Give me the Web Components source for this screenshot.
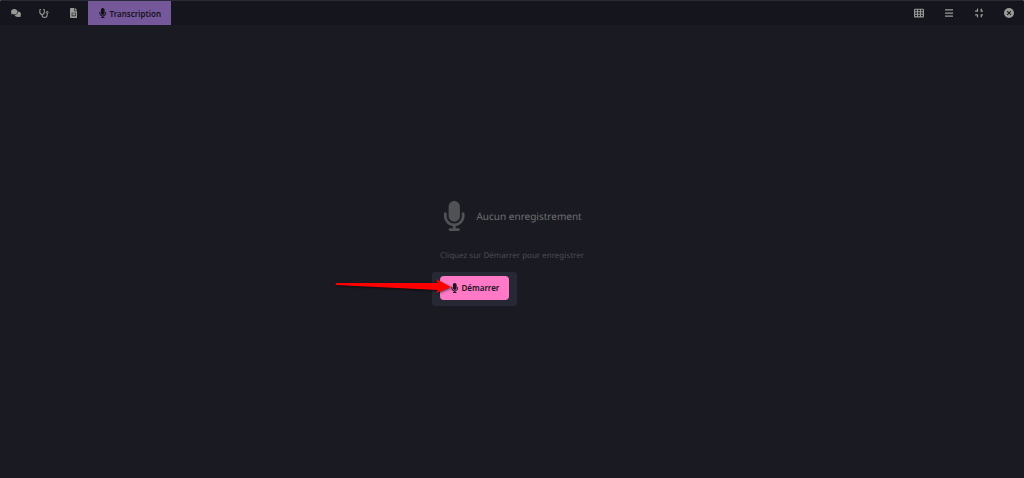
<!DOCTYPE html>
<html lang="fr">
<head>
<meta charset="utf-8">
<title>Transcription</title>
<style>
  html {
    background: #6b6c70;
  }
  body {
    margin: 0;
    font-family: "Noto Sans", "Open Sans", sans-serif;
    font-size: 8px;
    text-rendering: geometricPrecision;
  }
</style>
</head>
<body>
<app-window>
  <tool-bar slot="bar">
    <bar-button slot="start" icon="comments" label="Discussion"></bar-button>
    <bar-button slot="start" icon="stethoscope" label="Consultation"></bar-button>
    <bar-button slot="start" icon="file" label="Document"></bar-button>
    <bar-button slot="start" icon="microphone" active>Transcription</bar-button>
    <bar-button slot="end" icon="table" label="Tableau"></bar-button>
    <bar-button slot="end" icon="bars" label="Menu"></bar-button>
    <bar-button slot="end" icon="compress" label="Réduire"></bar-button>
    <bar-button slot="end" icon="close" label="Fermer"></bar-button>
  </tool-bar>
  <empty-state icon="microphone">
    <span slot="title">Aucun enregistrement</span>
    <span slot="hint">Cliquez sur Démarrer pour enregistrer</span>
    <record-button slot="action">Démarrer</record-button>
  </empty-state>
</app-window>

<script>
const ICONS = {
  comments: ['0 0 640 512', '<path d="M208 352c115 0 208-79 208-176S323 0 208 0 0 79 0 176c0 39 15 74 40 103-4 15-12 29-22 41-3 4-7 8-10 11-9 9-6 21 8 21 38 0 74-13 98-26 29 17 61 26 94 26z"/><path d="M448 176c0 112-99 199-218 208 25 75 105 128 202 128 34 0 66-8 94-23 24 12 58 23 98 23 15 0 20-13 8-23-15-14-26-31-32-49 25-29 40-65 40-104 0-93-82-169-192-175v15z"/>'],
  stethoscope: ['0 0 576 512', '<path fill="none" stroke="currentColor" stroke-width="60" stroke-linecap="round" stroke-linejoin="round" d="M96 34L48 46V176c0 74 58 132 128 132s128-58 128-132V46L256 34M176 308v32c0 80 62 142 144 142s144-62 144-142V256"/><circle cx="464" cy="192" r="54" fill="none" stroke="currentColor" stroke-width="52"/>'],
  file: ['0 0 384 512', '<path fill-rule="evenodd" d="M64 0C29 0 0 29 0 64v384c0 35 29 64 64 64h256c35 0 64-29 64-64V160H256c-18 0-32-14-32-32V0H64zM256 0v128h128L256 0zM88 240h208v176H88V240zm30 30v116h148V270H118z"/>'],
  microphone: ['0 0 384 512', '<path d="M192 0C139 0 96 43 96 96V256c0 53 43 96 96 96s96-43 96-96V96c0-53-43-96-96-96zM64 216c0-13-11-24-24-24s-24 11-24 24v40c0 89 66 163 152 174V464H120c-13 0-24 11-24 24s11 24 24 24H264c13 0 24-11 24-24s-11-24-24-24H216V430c86-11 152-85 152-174V216c0-13-11-24-24-24s-24 11-24 24v40c0 71-57 128-128 128S64 327 64 256V216z"/>'],
  table: ['0 0 512 512', '<path fill-rule="evenodd" d="M64 32C29 32 0 61 0 96v320c0 35 29 64 64 64h384c35 0 64-29 64-64V96c0-35-29-64-64-64H64zM60 92h94v80H60zM209 92h94v80H209zM358 92h94v80H358zM60 216h94v80H60zM209 216h94v80H209zM358 216h94v80H358zM60 340h94v80H60zM209 340h94v80H209zM358 340h94v80H358z"/>'],
  bars: ['0 0 448 512', '<path d="M0 64h448v64H0zM0 224h448v64H0zM0 384h448v64H0z"/>'],
  compress: ['0 0 448 512', '<path fill="none" stroke="currentColor" stroke-width="68" stroke-linecap="round" stroke-linejoin="round" d="M128 64v96H32M320 64v96h96M32 352h96v96M416 352h-96v96"/>'],
  close: ['0 0 512 512', '<path fill-rule="evenodd" d="M256 0a256 256 0 1 0 0 512 256 256 0 0 0 0-512zM175 141l81 81 81-81 34 34-81 81 81 81-34 34-81-81-81 81-34-34 81-81-81-81z"/>']
};

function icon(name) {
  const [box, shapes] = ICONS[name];
  return `<svg viewBox="${box}" fill="currentColor" aria-hidden="true">${shapes}</svg>`;
}

class AppWindow extends HTMLElement {
  constructor() {
    super();
    this.attachShadow({ mode: 'open' });
    this.shadowRoot.innerHTML = `
        <style>
            :host {
              display: flex;
              flex-direction: column;
              min-height: 100vh;
              box-sizing: border-box;
              overflow: hidden;
              border-radius: 3px 3px 0 0;
              background: #1a1a22;
            }
            main {
              flex: 1;
              display: flex;
              align-items: center;
              justify-content: center;
              padding-top: 3px;
            }
        </style>
        <slot name="bar"></slot>
        <main><slot></slot></main>
    `;
  }
}

class ToolBar extends HTMLElement {
  constructor() {
    super();
    this.attachShadow({ mode: 'open' });
    this.shadowRoot.innerHTML = `
        <style>
            :host {
              display: flex;
              justify-content: space-between;
              height: 24px;
              border-top: 1px solid #282b38;
              background: #14151d;
            }
            nav, div {
              display: flex;
            }
            nav {
              padding-left: 1px;
              --button-width: 29px;
            }
        </style>
        <nav><slot name="start"></slot></nav>
        <div><slot name="end"></slot></div>
    `;
  }
}

class BarButton extends HTMLElement {
  constructor() {
    super();
    this.attachShadow({ mode: 'open' });
    const label = this.getAttribute('label');
    this.shadowRoot.innerHTML = `
        <style>
            :host {
              display: flex;
              min-width: var(--button-width, 30px);
            }
            button {
              flex: 1;
              display: flex;
              align-items: center;
              justify-content: center;
              gap: 3px;
              padding: 0;
              border: none;
              background: transparent;
              color: #999996;
              font: inherit;
              cursor: pointer;
            }
            svg {
              height: 10px;
            }
            :host([icon="comments"]) svg {
              height: 8px;
            }
            :host([icon="stethoscope"]) svg {
              height: 9px;
            }
            :host([active]) button {
              padding: 0 10px 0 11px;
              background: #75589a;
              color: #15121c;
              font-weight: 600;
            }
        </style>
        <button type="button" ${label ? `aria-label="${label}"` : ''}>
          ${icon(this.getAttribute('icon'))}<slot></slot>
        </button>
    `;
  }
}

class EmptyState extends HTMLElement {
  constructor() {
    super();
    this.attachShadow({ mode: 'open' });
    this.shadowRoot.innerHTML = `
        <style>
            :host {
              display: block;
            }
            header {
              display: flex;
              align-items: center;
              gap: 11px;
              padding-left: 3px;
              color: #505154;
            }
            header svg {
              height: 30px;
            }
            h1 {
              margin: 0;
              font-size: 10px;
              font-weight: 400;
              line-height: 16px;
              color: #707173;
            }
            p {
              margin: 19px 0 10px;
              font-size: 8px;
              line-height: 12px;
              color: #4c4d50;
            }
        </style>
        <header>${icon(this.getAttribute('icon'))}<h1><slot name="title"></slot></h1></header>
        <p><slot name="hint"></slot></p>
        <slot name="action"></slot>
    `;
  }
}

class RecordButton extends HTMLElement {
  constructor() {
    super();
    this.attachShadow({ mode: 'open' });
    this.shadowRoot.innerHTML = `
        <style>
            :host {
              display: block;
              position: relative;
              width: fit-content;
              margin-left: -8px;
              padding: 4px 8px 6px;
              border-radius: 3px;
              background: #262833;
            }
            button {
              display: flex;
              align-items: center;
              gap: 3px;
              height: 24px;
              padding: 0 10px 0 11px;
              border: none;
              border-radius: 4px;
              background: #ff79c6;
              color: #22131f;
              font: inherit;
              font-weight: 600;
              cursor: pointer;
            }
            button svg {
              height: 10px;
            }
            /* pointer laid over the button, its tip on the microphone */
            .arrow {
              position: absolute;
              right: 66px;
              top: 7px;
              width: 116px;
              height: 16px;
              overflow: visible;
              filter: drop-shadow(1px 1px 1px rgba(0,0,0,0.6));
              pointer-events: none;
            }
        </style>
        <button type="button">${icon('microphone')}<slot></slot></button>
        <svg class="arrow" viewBox="0 0 116 16" aria-hidden="true">
          <path fill="#ff0000" d="M1 4L103 4L101 0L116 8L101 14L103 11L1 6Q0 5 1 4z"/>
        </svg>
    `;
  }
}

customElements.define('app-window', AppWindow);
customElements.define('tool-bar', ToolBar);
customElements.define('bar-button', BarButton);
customElements.define('empty-state', EmptyState);
customElements.define('record-button', RecordButton);
</script>
</body>
</html>
